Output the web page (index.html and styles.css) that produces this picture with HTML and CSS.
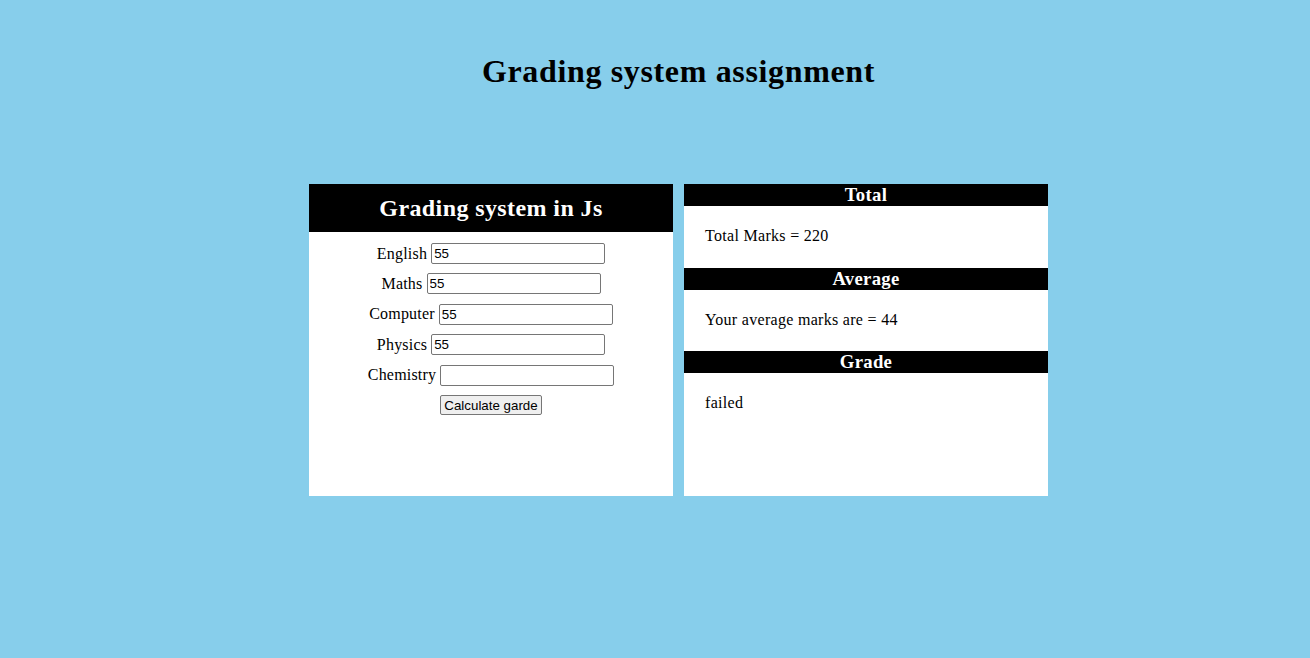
FILE: index.html
```html
<!DOCTYPE html>
<html>
<head>
<meta charset="utf-8">
<title>Grading system</title>
<link rel="stylesheet" href="styles.css">
</head>
<body>
<div class="page">
  <h1 class="title">Grading system assignment</h1>
  <div class="panels">
    <div class="panel form-panel">
      <h2 class="panel-head">Grading system in Js</h2>
      <div class="form">
        <div class="row"><label>English</label><input type="text" value="55"></div>
        <div class="row"><label>Maths</label><input type="text" value="55"></div>
        <div class="row"><label>Computer</label><input type="text" value="55"></div>
        <div class="row"><label>Physics</label><input type="text" value="55"></div>
        <div class="row"><label>Chemistry</label><input type="text" value=""></div>
        <div class="row"><button type="button">Calculate garde</button></div>
      </div>
    </div>
    <div class="panel result-panel">
      <h3 class="bar">Total</h3>
      <div class="result">Total Marks = 220</div>
      <h3 class="bar">Average</h3>
      <div class="result">Your average marks are = 44</div>
      <h3 class="bar">Grade</h3>
      <div class="result">failed</div>
    </div>
  </div>
</div>
</body>
</html>
```
FILE: styles.css
```css
html, body {
  margin: 0;
  padding: 0;
  background: #87ceeb;
}
body {
  font-family: "Liberation Serif", "Times New Roman", serif;
  font-size: 16px;
  color: #000;
}
.page {
  padding-left: 47px;
  display: flex;
  flex-direction: column;
  align-items: center;
}
.title {
  margin: 53px 0 0 0;
  font-size: 32px;
  line-height: 37px;
  font-weight: bold;
  letter-spacing: 0.65px;
}
.panels {
  margin-top: 94px;
  display: flex;
  gap: 11px;
}
.panel {
  width: 364px;
  height: 312px;
  background: #fff;
}
.panel-head {
  margin: 0;
  height: 48px;
  background: #000;
  color: #fff;
  font-size: 24px;
  font-weight: bold;
  text-align: center;
  line-height: 48px;
  letter-spacing: 0.4px;
}
.form {
  padding-top: 11px;
  display: flex;
  flex-direction: column;
  gap: 9.4px;
}
.row {
  display: flex;
  justify-content: center;
  align-items: center;
  height: 21px;
  gap: 4px;
}
.row label {
  font-size: 16px;
  line-height: 18px;
  letter-spacing: 0.2px;
}
.row input {
  width: 174px;
  height: 21px;
  box-sizing: border-box;
  border: 1px solid #767676;
  border-radius: 2px;
  padding: 1px 2px;
  font-family: "Liberation Sans", Arial, sans-serif;
  font-size: 13.33px;
  margin: 0;
}
.row button {
  font-family: "Liberation Sans", Arial, sans-serif;
  font-size: 13.33px;
  height: 20px;
  padding: 1px 3px;
  border: 1px solid #767676;
  border-radius: 2px;
  background: #efefef;
  color: #000;
  margin: 0;
}
.bar {
  margin: 0;
  height: 22px;
  line-height: 22px;
  background: #000;
  color: #fff;
  font-size: 18.72px;
  font-weight: bold;
  text-align: center;
  letter-spacing: 0.3px;
}
.result {
  padding: 21px 21px 22.5px;
  line-height: 18px;
  letter-spacing: 0.3px;
}
```
